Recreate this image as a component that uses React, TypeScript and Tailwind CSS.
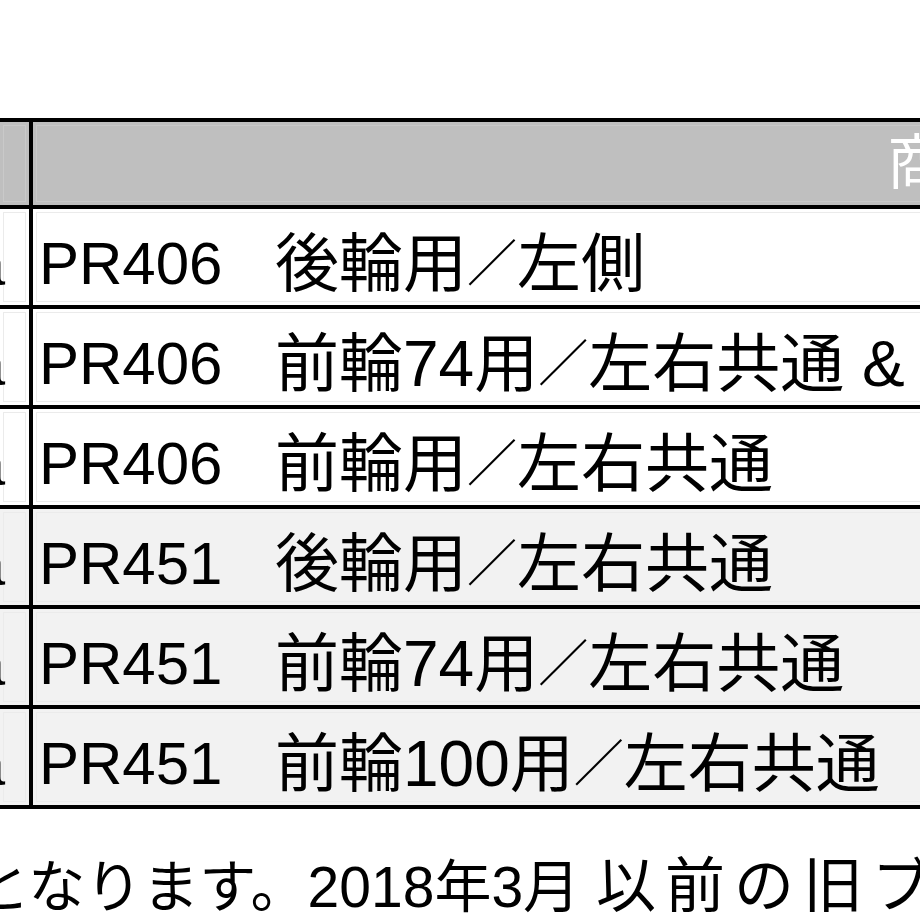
import React from "react";

const rows = [
  { part: "PR406", desc: ["後輪用", "左側"], shade: false },
  { part: "PR406", desc: ["前輪74用", "左右共通 & 後輪用／右側"], shade: false },
  { part: "PR406", desc: ["前輪用", "左右共通"], shade: false },
  { part: "PR451", desc: ["後輪用", "左右共通"], shade: true },
  { part: "PR451", desc: ["前輪74用", "左右共通"], shade: true },
  { part: "PR451", desc: ["前輪100用", "左右共通"], shade: true },
];

export default function App() {
  return (
    <div className="w-[920px] h-[919px] overflow-hidden bg-white text-black font-['Liberation_Sans','Noto_Sans_CJK_JP',sans-serif]">
      {/* Table */}
      <div className="mt-[118px] w-[1400px] border-t-4 border-black">
        {/* Header */}
        <div className="flex h-[87px] bg-[#bfbfbf] border-b-4 border-black">
          <div className="w-[33px] border-r-4 border-black p-[3px]">
            <div className="h-full border border-[#c9c9c9]" />
          </div>
          <div className="flex-1 p-[3px]">
            <div className="h-full flex items-center border border-[#c9c9c9] pl-[850px] text-[60px] leading-none text-white">
              商品名
            </div>
          </div>
        </div>

        {/* Rows */}
        {rows.map((row, i) => (
          <div
            key={i}
            className={
              row.shade
                ? "flex h-[100px] border-b-4 border-black bg-[#f2f2f2]"
                : "flex h-[100px] border-b-4 border-black bg-white"
            }
          >
            <div className="w-[33px] border-r-4 border-black p-[3px] overflow-hidden">
              <div className="h-full flex items-center justify-end pr-[20px] pt-[16px] border border-[#ebebeb] text-[60px] leading-none">
                a
              </div>
            </div>
            <div className="flex-1 p-[3px]">
              <div className="h-full flex items-center pl-[2px] pt-[14px] border border-[#ebebeb] whitespace-nowrap leading-none">
                <span className="inline-block w-[236px] text-[60px]">{row.part}</span>
                <span className="text-[64px]">{row.desc[0]}</span>
                <span className="text-[50px]">／</span>
                <span className="text-[64px]">{row.desc[1]}</span>
              </div>
            </div>
          </div>
        ))}
      </div>

      {/* Note under the table */}
      <div className="mt-[48px] ml-[-27px] whitespace-nowrap text-[57px] leading-none">
        <span>となります。2018年3月 </span>
        <span className="text-[60px] tracking-[9px]">以前の旧ブランド品</span>
      </div>
    </div>
  );
}
